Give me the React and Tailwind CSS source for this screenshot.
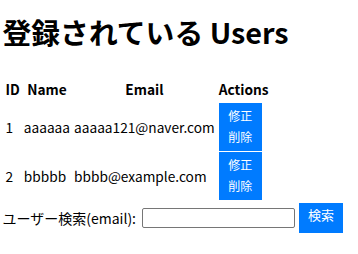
import React, { useState } from 'react';

const users = [
  { id: 1, name: 'aaaaaa', email: 'aaaaa121@naver.com' },
  { id: 2, name: 'bbbbb', email: 'bbbb@example.com' },
];

const App = () => {
  const [query, setQuery] = useState('');

  return (
    <div className="min-h-screen bg-white pl-[2.5px] pt-[11px] font-['Noto_Sans_CJK_JP','Noto_Sans',sans-serif] text-black">
      {/* 見出し */}
      <h1 className="mb-[25px] text-[28.8px] font-bold leading-[42px]">登録されている Users</h1>

      {/* ユーザー一覧 */}
      <table className="border-separate border-spacing-x-[2px] border-spacing-y-[1px] text-[13.7px] leading-[21px]">
        <thead>
          <tr>
            <th className="px-[1px] pt-0 pb-[2px] text-center font-bold">ID</th>
            <th className="px-[1px] pt-0 pb-[2px] text-center font-bold">Name</th>
            <th className="px-[1px] pt-0 pb-[2px] text-center font-bold">Email</th>
            <th className="px-[1px] pt-0 pb-[2px] text-center font-bold">Actions</th>
          </tr>
        </thead>
        <tbody>
          {users.map((u) => (
            <tr key={u.id}>
              <td className="px-[1px] py-0 align-middle">{u.id}</td>
              <td className="px-[1px] py-0 align-middle">{u.name}</td>
              <td className="px-[1px] py-0 align-middle">{u.email}</td>
              <td className="px-[1px] py-0 align-middle">
                <button className="flex h-[24px] w-[43px] items-center justify-center bg-[#007bff] text-[12px] leading-[17px] text-white">
                  修正
                </button>
                <button className="flex h-[24px] w-[43px] items-center justify-center bg-[#007bff] pb-[6px] text-[12px] leading-[17px] text-white">
                  削除
                </button>
              </td>
            </tr>
          ))}
        </tbody>
      </table>

      {/* 検索フォーム */}
      <div className="mt-[2px] flex h-[30px] items-center text-[14px] leading-[21px]">
        <span className="shrink-0 whitespace-nowrap">ユーザー検索(email):</span>
        <input
          value={query}
          onChange={(e) => setQuery(e.target.value)}
          className="ml-[6px] h-[20px] w-[153px] shrink-0 rounded-[2px] border border-[#767676] bg-white px-[2px] text-[13px] outline-none"
        />
        <button className="ml-[4px] flex h-[30px] w-[44px] shrink-0 items-center justify-center bg-[#007bff] pb-[6px] text-[13px] leading-[18px] text-white">
          検索
        </button>
      </div>
    </div>
  );
};

export default App;
